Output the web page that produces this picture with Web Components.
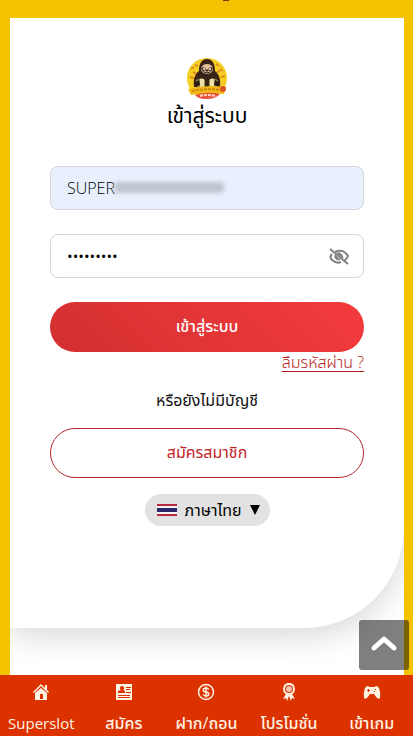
<!DOCTYPE html>
<html lang="th">
<head>
<meta charset="utf-8">
<meta name="viewport" content="width=device-width, initial-scale=1">
<title>Superslot</title>
<style>
  body{
    margin: 0;
    background: #f3c200;
    font-family: "Open Sans", "Noto Sans Thai", "Noto Sans", sans-serif;
    font-size: 16px;
    color: #111;
  }
</style>
</head>
<body>
<slot-app>
  <login-card>
    <sloth-logo slot="logo"></sloth-logo>
    <span slot="title">เข้าสู่ระบบ</span>
    <text-field label="ชื่อผู้ใช้" type="text" value="SUPER" filled masked></text-field>
    <text-field label="รหัสผ่าน" type="password" value="123456789"></text-field>
    <pill-button>เข้าสู่ระบบ</pill-button>
    <forgot-link>ลืมรหัสผ่าน ?</forgot-link>
    <span slot="hint">หรือยังไม่มีบัญชี</span>
    <pill-button slot="signup" outline>สมัครสมาชิก</pill-button>
    <language-select slot="language"></language-select>
  </login-card>
  <scroll-top slot="overlay"></scroll-top>
  <bottom-nav slot="nav">
    <nav-item icon="home" lang="en">Superslot</nav-item>
    <nav-item icon="card">สมัคร</nav-item>
    <nav-item icon="coin">ฝาก/ถอน</nav-item>
    <nav-item icon="award">โปรโมชั่น</nav-item>
    <nav-item icon="game">เข้าเกม</nav-item>
  </bottom-nav>
</slot-app>

<script>
class BaseElement extends HTMLElement{
  constructor(){
    super();
    this.attachShadow({mode: 'open'});
  }

  connectedCallback(){
    this.shadowRoot.innerHTML = `<style>*{ box-sizing: border-box; } ${this.constructor.styles}</style>${this.template()}`;
  }
}

class SlotApp extends BaseElement{
  static get styles(){
    return /* css */ `
      :host{
        display: flex;
        flex-direction: column;
        height: 100vh;
        position: relative;
        overflow: hidden;
      }
      main{
        flex: 1;
        min-height: 0;
        margin: 18px 9px 0 10px;
        background: #fff;
        overflow: hidden;
      }
      .tail{
        position: absolute;
        top: 0;
        left: calc(50% + 16px);
        width: 6px;
        height: 1px;
        background: #7d3508;
      }
    `
  }
  template(){
    return /* html */ `
      <span class="tail"></span>
      <main><slot></slot></main>
      <slot name="overlay"></slot>
      <slot name="nav"></slot>
    `
  }
}

class LoginCard extends BaseElement{
  static get styles(){
    return /* css */ `
      :host{
        display: block;
        background: #fff;
        padding: 40px 40px 102px;
        border-radius: 0 0 100px 0;
        box-shadow: 0 8px 32px rgba(0, 0, 0, .16);
      }
      header{
        display: flex;
        flex-direction: column;
        align-items: center;
        margin-bottom: 36px;
      }
      h1{
        margin: 0;
        font-size: 21px;
        font-weight: 400;
        line-height: 30px;
        color: #000;
      }
      form{
        display: flex;
        flex-direction: column;
        gap: 24px;
      }
      p{
        margin: 16px 0;
        line-height: 24px;
        text-align: center;
      }
      footer{
        display: flex;
        justify-content: center;
        margin-top: 16px;
      }
      ::slotted(forgot-link){ margin-top: -24px; }
    `
  }
  template(){
    return /* html */ `
      <header>
        <slot name="logo"></slot>
        <h1><slot name="title"></slot></h1>
      </header>
      <form><slot></slot></form>
      <p><slot name="hint"></slot></p>
      <slot name="signup"></slot>
      <footer><slot name="language"></slot></footer>
    `
  }
}

class SlothLogo extends BaseElement{
  static get styles(){
    return /* css */ `
      :host{ display: block; height: 42px; }
      svg{ display: block; }
    `
  }
  template(){
    return /* html */ `
      <svg width="42" height="42" viewBox="0 0 42 42" aria-hidden="true">
        <circle cx="21" cy="20" r="20" fill="#f5cf22"/>
        <path d="M5 11l3-2M9 7l3 1M30 6l3 2M34 11l3 2M4 19l4 1M35 19l4-1M7 14l4 2M31 14l3-1" stroke="#e08a25" stroke-width="2"/>
        <path d="M13 13C13 5 16 1 21 1s8 4 8 12c4 3 6 8 5 16H8c-1-8 1-13 5-16z" fill="#392218"/>
        <ellipse cx="21" cy="11" rx="6" ry="5" fill="#dfc099"/>
        <path d="M15 10q3-2 5 1l-3 3zM27 10q-3-2-5 1l3 3z" fill="#3c241b"/>
        <circle cx="18" cy="11" r="1" fill="#fff"/><circle cx="24" cy="11" r="1" fill="#fff"/>
        <path d="M20 12h2v1h-2zM18 14q3 2 6 0" stroke="#2d1813" fill="none"/>
        <path d="M10 22l6-2 3 2v8h-9zM32 22l-6-2-3 2v8h9z" fill="#8f9550"/>
        <path d="M14 21h4v8h-4zM24 21h4v8h-4z" fill="#efe0aa"/>
        <path d="M9 24l4-2 1 5-4 2zM33 24l-4-2-1 5 4 2z" fill="#2d1914"/>
        <path d="M2 31q19-5 38-2l-2 7q-18-2-33 1z" fill="#f1b818"/>
        <path d="M6 33q15-3 29-1" stroke="#cb8910" stroke-width="2" stroke-dasharray="3 1" fill="none"/>
        <path d="M9 37q12-4 25-1-4 5-14 5-8 0-11-4z" fill="#e7503a"/>
        <path d="M14 38q7-2 15 0" stroke="#ffd5c6" stroke-width="2" stroke-dasharray="3 1" fill="none"/>
        <circle cx="37" cy="31" r="3" fill="#df5425"/>
      </svg>
    `
  }
}

class TextField extends BaseElement{
  static get styles(){
    return /* css */ `
      :host{ display: block; position: relative; }
      input{
        display: block;
        width: 100%;
        height: 44px;
        padding: 0 48px 0 16px;
        border: 1px solid #d4d6da;
        border-radius: 8px;
        background: #fff;
        font: inherit;
        font-weight: 300;
        color: #000;
        outline: none;
      }
      input[type="password"]{ font-size: 15px; font-weight: 400; }
      :host([filled]) input{ background: #e8f0fe; }
      .mask{
        position: absolute;
        left: 64px;
        top: 16px;
        width: 110px;
        height: 11px;
        border-radius: 4px;
        background: #bfc5ce;
        filter: blur(2px);
      }
      button{
        position: absolute;
        right: 14px;
        top: 13px;
        padding: 0;
        border: 0;
        background: none;
        color: #808080;
      }
      svg{ display: block; }
    `
  }
  template(){
    const type = this.getAttribute('type');
    const label = this.getAttribute('label');
    return /* html */ `
      <input type="${type}" aria-label="${label}" value="${this.getAttribute('value')}">
      ${this.hasAttribute('masked') ? '<span class="mask"></span>' : ''}
      ${type === 'password' ? `
      <button type="button" aria-label="แสดงรหัสผ่าน">
        <svg width="22" height="20" viewBox="0 0 22 20" fill="none" stroke="currentColor">
          <path d="M7 5Q15 1 20 9q-1 3-4 5" stroke-width="2"/>
          <path d="M4 7Q1 10 4 13q5 4 9 2" stroke-width="2"/>
          <path d="M9 6q5-1 6 5l-5-4" fill="currentColor"/>
          <path d="M7 8q-1 5 5 5z" fill="currentColor"/>
          <path d="M2 2l18 15" stroke-width="2"/>
        </svg>
      </button>` : ''}
    `
  }
}

class PillButton extends BaseElement{
  static get styles(){
    return /* css */ `
      :host{ display: block; }
      button{
        display: block;
        width: 100%;
        height: 50px;
        border: 0;
        border-radius: 25px;
        background: linear-gradient(45deg, #d32f2f, #f43b3e);
        font: inherit;
        font-weight: 500;
        color: #fff;
      }
      :host([outline]) button{
        border: 1px solid #b3262b;
        background: #fff;
        color: #c4232a;
        font-weight: 400;
      }
    `
  }
  template(){
    return `<button type="button"><slot></slot></button>`
  }
}

class ForgotLink extends BaseElement{
  static get styles(){
    return /* css */ `
      :host{ display: block; text-align: right; line-height: 20px; font-weight: 300; }
      a{ color: #b71c1c; text-underline-offset: 3px; }
    `
  }
  template(){
    return `<a href="#forgot"><slot></slot></a>`
  }
}

class LanguageSelect extends BaseElement{
  static get styles(){
    return /* css */ `
      :host{
        display: flex;
        align-items: center;
        gap: 8px;
        height: 32px;
        padding: 0 10px 0 12px;
        border-radius: 16px;
        background: #e2e2e2;
      }
      select{
        appearance: none;
        padding: 0;
        border: 0;
        background: none;
        font: inherit;
        color: #000;
        line-height: 30px;
        outline: none;
      }
      svg{ display: block; }
    `
  }
  template(){
    return /* html */ `
      <svg width="20" height="14" viewBox="0 0 20 14" aria-hidden="true">
        <path fill="#f5f5f8" d="M0 0h20v14H0z"/>
        <path fill="#b8293d" d="M0 1h20v2H0zM0 11h20v2H0z"/>
        <path fill="#29266b" d="M0 5h20v4H0z"/>
        <path fill="#e2e2e2" d="M0 0h20v1H0zM0 13h20v1H0z"/>
      </svg>
      <select aria-label="ภาษา"><option>ภาษาไทย</option></select>
      <svg width="10" height="10" viewBox="0 0 10 10" aria-hidden="true"><path d="M0 0h10L5 10z"/></svg>
    `
  }
}

class ScrollTop extends BaseElement{
  static get styles(){
    return /* css */ `
      :host{ position: absolute; right: 4px; bottom: 66px; }
      button{
        display: grid;
        place-items: center;
        width: 50px;
        height: 50px;
        padding: 0;
        border: 0;
        border-radius: 3px;
        background: rgba(0, 0, 0, .5);
      }
    `
  }
  template(){
    return /* html */ `
      <button type="button" aria-label="กลับขึ้นด้านบน">
        <svg width="26" height="20" viewBox="0 0 26 20" fill="none" stroke="#fff" stroke-width="5" stroke-linecap="round" stroke-linejoin="round"><path d="M3 13l10-9 10 9"/></svg>
      </button>
    `
  }
}

class BottomNav extends BaseElement{
  static get styles(){
    return /* css */ `
      :host{ display: block; background: #dc3200; }
      nav{ display: grid; grid-template-columns: repeat(5, 1fr); height: 61px; }
    `
  }
  template(){
    return `<nav><slot></slot></nav>`
  }
}

const icons = {
  home: '<path d="M9 1L1 9l1 1 7-7 7 7 1-1-2-2V2h-2v3z"/><path fill-rule="evenodd" d="M9 5l-6 5v7h12v-7zM8 11h3v5H8z"/>',
  card: '<path fill-rule="evenodd" d="M1 1h16v16H1zM3 10h7V8L8 7l1-1V4L7 3 5 4v2l1 1-3 1zM11 4v1h5V4zM11 6v1h4V6zM11 9v1h5V9zM3 12v1h12v-1zM3 14v1h12v-1z"/>',
  coin: '<circle cx="9" cy="9" r="7.500" fill="none" stroke="currentColor" stroke-width="1.500"/><path d="M11.800 6.500Q11 5 9 5 6.300 5 6.300 7T9 9t2.700 2T9 13q-2 0-2.800-1.500M9 3.500v11" fill="none" stroke="currentColor" stroke-width="1.500"/>',
  award: '<path fill-rule="evenodd" d="M7 0h4l3 2 1 4-1 4-2 1 3 5-3-1-1 3-2-5-2 5-1-3-3 1 3-5-2-1-1-4 1-4zM9 2a4 4 0 1 0 0 8 4 4 0 0 0 0-8z"/><circle cx="9" cy="6" r="3" fill="#f6c4b4"/>',
  game: '<path fill-rule="evenodd" d="M4 3l3 1h4l3-1 2 2q2 5 1 10-1 1-3 0l-3-4H7l-3 4q-2 1-3 0Q0 10 2 5zM5 6v1H4v1h1v1h1V8h1V7H6V6zM12 6v1h1V6zM11 8v1h1V8z"/>'
};

class NavItem extends BaseElement{
  static get styles(){
    return /* css */ `
      :host{ display: block; min-width: 0; }
      a{
        display: flex;
        flex-direction: column;
        align-items: center;
        gap: 9px;
        padding-top: 8px;
        color: #fff3e4;
        font-size: 16px;
        font-weight: 500;
        line-height: 26px;
        text-decoration: none;
        white-space: nowrap;
      }
      :host(:lang(en)) a{ font-size: 15px; font-weight: 400; }
      svg{ display: block; flex: none; }
    `
  }
  template(){
    return /* html */ `
      <a href="#${this.getAttribute('icon')}">
        <svg width="18" height="18" viewBox="0 0 18 18" fill="currentColor" aria-hidden="true">${icons[this.getAttribute('icon')]}</svg>
        <span><slot></slot></span>
      </a>
    `
  }
}

customElements.define('slot-app', SlotApp);
customElements.define('login-card', LoginCard);
customElements.define('sloth-logo', SlothLogo);
customElements.define('text-field', TextField);
customElements.define('pill-button', PillButton);
customElements.define('forgot-link', ForgotLink);
customElements.define('language-select', LanguageSelect);
customElements.define('scroll-top', ScrollTop);
customElements.define('bottom-nav', BottomNav);
customElements.define('nav-item', NavItem);
</script>
</body>
</html>
